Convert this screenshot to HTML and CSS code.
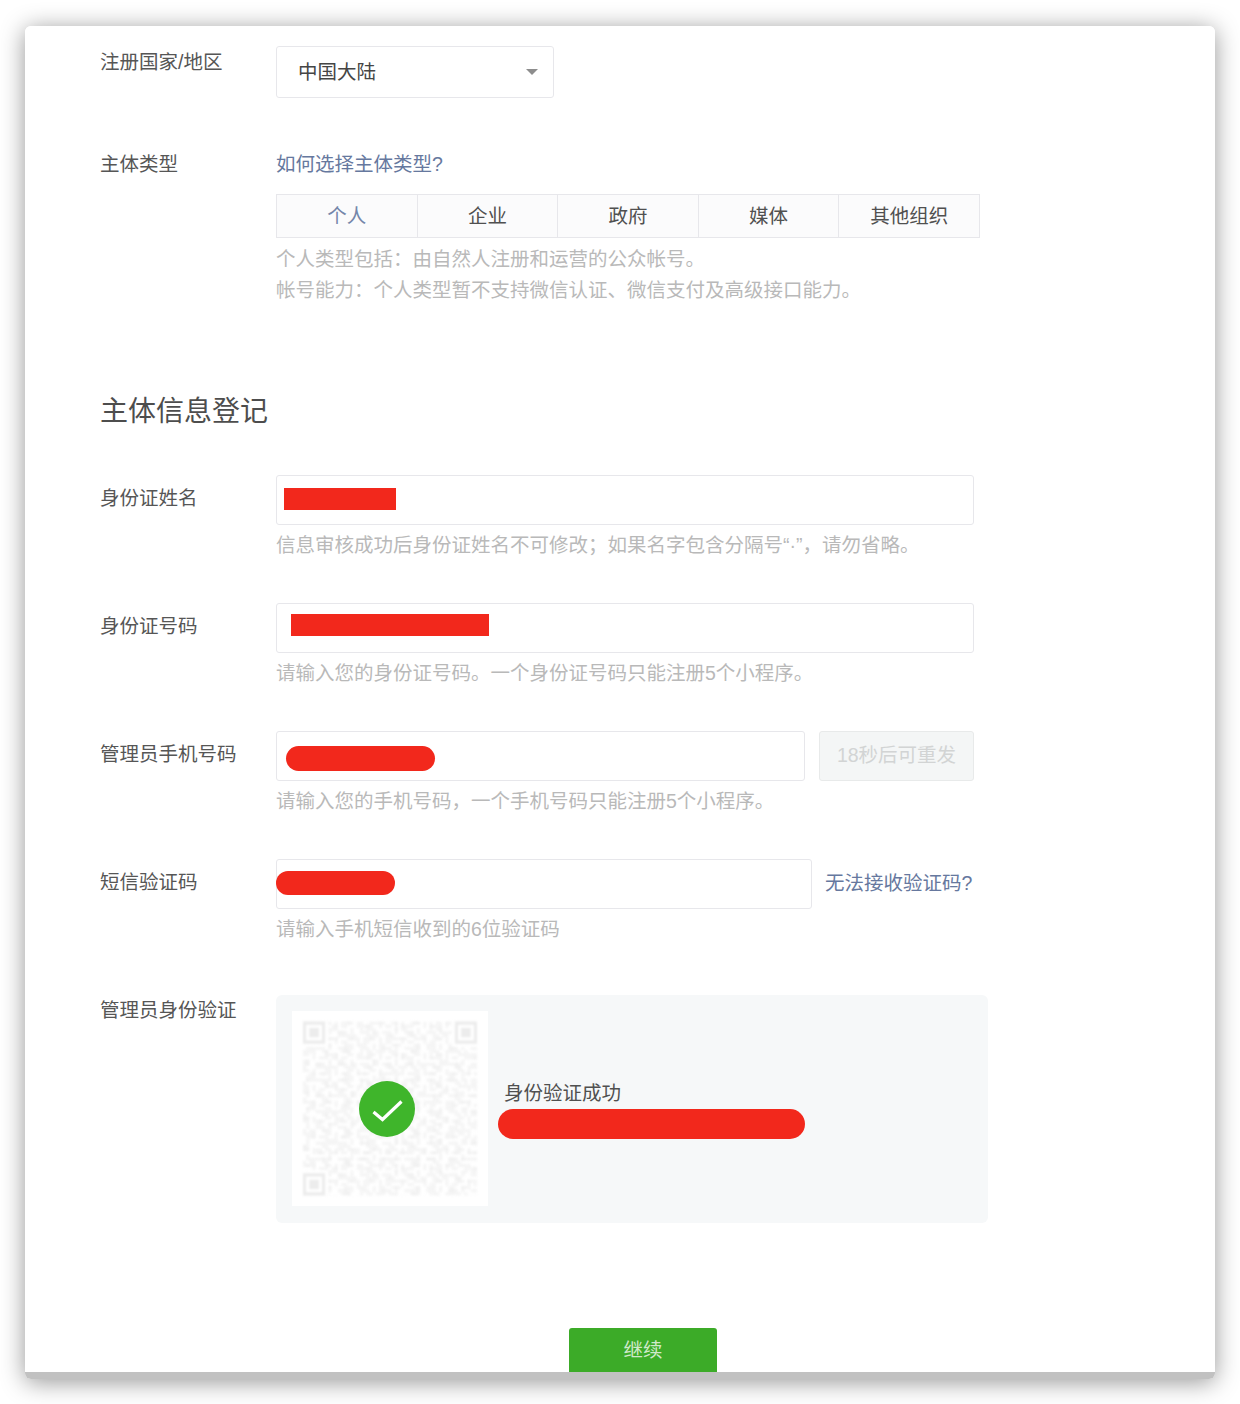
FILE: index.html
```html
<!DOCTYPE html>
<html lang="zh-CN">
<head>
<meta charset="utf-8">
<title>小程序注册</title>
<link rel="stylesheet" href="styles.css">
</head>
<body>
<div class="window">
  <main class="card">
    <div class="row row-country">
      <div class="label label-country">注册国家/地区</div>
      <div class="select"><span>中国大陆</span><i class="caret"></i></div>
    </div>

    <div class="row row-type">
      <div class="label">主体类型</div>
      <div class="field">
        <a class="link type-link">如何选择主体类型?</a>
        <div class="tabs">
          <div class="tab tab-active">个人</div>
          <div class="tab">企业</div>
          <div class="tab">政府</div>
          <div class="tab">媒体</div>
          <div class="tab">其他组织</div>
        </div>
        <p class="hint">个人类型包括：由自然人注册和运营的公众帐号。</p>
        <p class="hint">帐号能力：个人类型暂不支持微信认证、微信支付及高级接口能力。</p>
      </div>
    </div>

    <h2 class="heading">主体信息登记</h2>

    <div class="row form-row">
      <div class="label label-input">身份证姓名</div>
      <div class="field">
        <div class="input input-full"><span class="mask mask-name"></span></div>
        <p class="hint hint-input">信息审核成功后身份证姓名不可修改；如果名字包含分隔号“·”，请勿省略。</p>
      </div>
    </div>

    <div class="row form-row">
      <div class="label label-input">身份证号码</div>
      <div class="field">
        <div class="input input-full"><span class="mask mask-id"></span></div>
        <p class="hint hint-input">请输入您的身份证号码。一个身份证号码只能注册5个小程序。</p>
      </div>
    </div>

    <div class="row form-row">
      <div class="label label-input">管理员手机号码</div>
      <div class="field">
        <div class="input-line">
          <div class="input input-phone"><span class="mask mask-phone"></span></div>
          <div class="resend">18秒后可重发</div>
        </div>
        <p class="hint hint-input">请输入您的手机号码，一个手机号码只能注册5个小程序。</p>
      </div>
    </div>

    <div class="row form-row">
      <div class="label label-input">短信验证码</div>
      <div class="field">
        <div class="input-line">
          <div class="input input-sms"><span class="mask mask-sms"></span></div>
          <a class="link sms-link">无法接收验证码?</a>
        </div>
        <p class="hint hint-input">请输入手机短信收到的6位验证码</p>
      </div>
    </div>

    <div class="row row-verify">
      <div class="label">管理员身份验证</div>
      <div class="verify">
        <div class="qr">
          <svg class="qr-code" viewBox="0 0 55 55" aria-hidden="true">
            <defs>
              <pattern id="qa" width="7" height="5" patternUnits="userSpaceOnUse">
                <path d="M0 0h2v1H0zM3 0h1v2H3zM5 1h2v1H5zM1 2h1v2H1zM4 3h2v1H4zM0 4h1v1H0zM6 3h1v2H6z"/>
              </pattern>
              <pattern id="qb" width="11" height="9" patternUnits="userSpaceOnUse">
                <path d="M1 0h3v1H1zM7 0h1v3H7zM9 1h2v2H9zM0 3h2v2H0zM4 4h2v2H4zM8 5h3v1H8zM2 7h2v2H2zM6 7h3v1H6z"/>
              </pattern>
            </defs>
            <rect class="qr-a" width="55" height="55" fill="url(#qa)"/>
            <rect class="qr-a" width="55" height="55" fill="url(#qb)"/>
            <g class="qr-clear">
              <rect width="8" height="8"/>
              <rect x="47" width="8" height="8"/>
              <rect y="47" width="8" height="8"/>
            </g>
            <g class="qr-finder">
              <path d="M0 0h7v7H0zM1 1v5h5V1z" fill-rule="evenodd"/><rect x="2" y="2" width="3" height="3"/>
              <path d="M48 0h7v7h-7zM49 1v5h5V1z" fill-rule="evenodd"/><rect x="50" y="2" width="3" height="3"/>
              <path d="M0 48h7v7H0zM1 49v5h5v-5z" fill-rule="evenodd"/><rect x="2" y="50" width="3" height="3"/>
            </g>
          </svg>
          <svg class="qr-check" viewBox="0 0 56 56" aria-hidden="true">
            <circle cx="28" cy="28" r="28" fill="#3fb52b"/>
            <path d="M14.500 31 L23.500 38.500 L42.500 20.500" fill="none" stroke="#fff" stroke-width="3.200" stroke-linejoin="miter"/>
          </svg>
        </div>
        <div class="verify-text">
          <div class="verify-ok">身份验证成功</div>
          <span class="mask mask-admin"></span>
        </div>
      </div>
    </div>

    <div class="actions"><div class="btn">继续</div></div>
  </main>
  <div class="strip"></div>
</div>
</body>
</html>
```

FILE: styles.css
```css
* { box-sizing: border-box; }
html, body { margin: 0; padding: 0; background: #fff; }
body {
  font-family: "Liberation Sans", "Noto Sans CJK SC", sans-serif;
  font-size: 19.5px;
  color: #4a4a4a;
  height: 1404px;
  overflow: hidden;
  padding: 26px 25px 0;
}
.window {
  width: 1190px;
  border-radius: 6px;
  box-shadow: 0 3px 24px rgba(0, 0, 0, .42);
}
.card {
  height: 1346px;
  background: #fff;
  border-radius: 6px 6px 0 0;
  padding: 20px 0 0 75px;
  overflow: hidden;
}
.strip {
  height: 7px;
  background: #c1c1c1;
  border-radius: 0 0 6px 6px;
}
.row { display: flex; align-items: flex-start; }
.label { width: 176px; flex: none; line-height: 30px; color: #565656; }
.label-country { padding-top: 1px; }
.label-input { padding-top: 8px; }
.field { flex: none; }
.link { color: #66789e; }

.select {
  width: 278px;
  height: 52px;
  border: 1px solid #e7e7eb;
  border-radius: 3px;
  display: flex;
  align-items: center;
  justify-content: space-between;
  padding: 0 15px 3px 21px;
  color: #454545;
}
.caret {
  width: 0;
  height: 0;
  margin-top: 3px;
  border-left: 6px solid transparent;
  border-right: 6px solid transparent;
  border-top: 6px solid #8d8d8d;
}

.row-type { margin-top: 51px; }
.type-link { display: block; line-height: 30px; }
.tabs {
  display: flex;
  width: 704px;
  height: 44px;
  margin-top: 15px;
  margin-bottom: 6px;
  border: 1px solid #e7e7eb;
  background: #fbfbfc;
}
.tab {
  flex: 1;
  display: flex;
  align-items: center;
  justify-content: center;
  padding-bottom: 4px;
  border-left: 1px solid #e7e7eb;
  color: #505050;
}
.tab:first-child { border-left: 0; }
.tab-active { color: #7486aa; }
.hint { margin: 0; line-height: 31px; color: #b9b9b9; }
.hint-input { margin-top: 5px; }

.heading {
  margin: 86px 0 43px;
  font-size: 28px;
  font-weight: 400;
  line-height: 40px;
  color: #4d4d4d;
}

.form-row { margin-bottom: 42px; }
.input {
  height: 50px;
  border: 1px solid #e7e7eb;
  border-radius: 3px;
  display: flex;
  align-items: center;
  background: #fff;
}
.input-full { width: 698px; }
.input-line { display: flex; align-items: center; }
.input-phone { width: 529px; }
.input-sms { width: 536px; }
.resend {
  width: 155px;
  height: 50px;
  margin-left: 14px;
  display: flex;
  align-items: center;
  justify-content: center;
  padding-bottom: 5px;
  background: #f4f6f6;
  border: 1px solid #e8eaea;
  border-radius: 3px;
  color: #d2d4d4;
}
.sms-link { margin: 0 0 5px 13px; white-space: nowrap; }

.mask { display: block; background: #f2281c; }
.mask-name { width: 112px; height: 22px; margin: 0 0 2px 7px; }
.mask-id { width: 198px; height: 22px; margin: 0 0 7px 14px; }
.mask-phone { width: 149px; height: 25px; margin: 4px 0 0 9px; border-radius: 13px; }
.mask-sms { width: 119px; height: 24px; margin: 0 0 2px -1px; border-radius: 12px; }
.mask-admin { width: 307px; height: 30px; border-radius: 15px; margin-left: -6px; }

.row-verify { margin-top: 50px; }
.verify {
  width: 712px;
  height: 228px;
  padding: 16px;
  background: #f6f8f9;
  border-radius: 6px;
  display: flex;
  align-items: flex-start;
}
.qr {
  position: relative;
  width: 196px;
  height: 195px;
  padding: 10px 11px;
  background: #fff;
  flex: none;
}
.qr-code { display: block; width: 174px; height: 175px; filter: blur(.8px); }
.qr-a { opacity: .55; }
.qr-code defs path { fill: #ededed; }
.qr-clear { fill: #fff; }
.qr-finder { fill: #ececec; }
.qr-check {
  position: absolute;
  left: 67px;
  top: 70px;
  width: 56px;
  height: 56px;
}
.verify-text { margin: 67px 0 0 16px; }
.verify-ok { line-height: 30px; height: 31px; color: #505050; }

.actions { margin-top: 105px; padding-left: 469px; }
.btn {
  width: 148px;
  height: 44px;
  background: #3cab28;
  border-radius: 3px 3px 0 0;
  color: #cfe9c9;
  display: flex;
  align-items: center;
  justify-content: center;
  padding-bottom: 4px;
}
```
